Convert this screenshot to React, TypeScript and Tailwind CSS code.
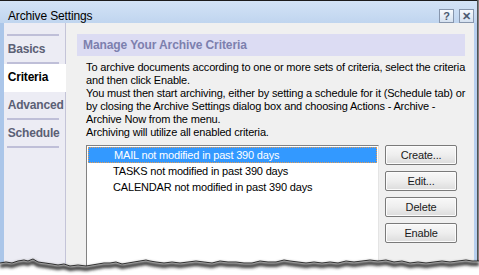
import React from "react";

const tabs = ["Basics", "Criteria", "Advanced", "Schedule"];

const criteria = [
  "MAIL not modified in past 390 days",
  "TASKS not modified in past 390 days",
  "CALENDAR not modified in past 390 days",
];

const intro = [
  "To archive documents according to one or more sets of criteria, select the criteria",
  "and then click Enable.",
  "You must then start archiving, either by setting a schedule for it (Schedule tab) or",
  "by closing the Archive Settings dialog box and choosing Actions - Archive -",
  "Archive Now from the menu.",
  "Archiving will utilize all enabled criteria.",
];

// jagged bottom edge of the "torn paper" screenshot effect
const tearPts: [number, number][] = [
  [0, 8], [6, 7], [12, 8], [18, 6], [24, 5], [28, 6], [33, 4], [38, 7], [45, 8], [52, 9], [58, 10],
  [64, 9], [70, 11], [78, 10], [86, 11], [92, 10], [98, 9], [104, 8], [110, 8], [116, 7], [122, 9],
  [128, 8], [134, 7], [140, 6], [146, 5], [150, 6], [156, 7], [164, 8], [172, 7], [180, 8], [188, 7],
  [196, 6], [204, 7], [212, 8], [220, 6], [228, 7], [236, 7], [244, 8], [252, 8], [260, 6], [268, 7],
  [276, 7], [284, 5], [290, 6], [298, 7], [306, 8], [314, 7], [322, 8], [330, 7], [338, 8], [346, 6],
  [354, 7], [362, 6], [370, 5], [378, 6], [386, 5], [394, 7], [402, 6], [410, 8], [418, 7], [426, 8],
  [434, 7], [442, 6], [450, 7], [458, 6], [466, 5], [472, 6], [479, 6],
];

function TornEdge() {
  const line = tearPts.map(([x, y], i) => `${i ? "L" : "M"}${x} ${y}`).join(" ");
  return (
    <svg className="absolute left-0 bottom-0" width="479" height="20" viewBox="0 0 479 20">
      <defs>
        <filter id="blur" x="-5%" y="-100%" width="110%" height="300%">
          <feGaussianBlur stdDeviation="1.6" />
        </filter>
      </defs>
      <path d={`${line} L479 20 L0 20 Z`} fill="#ffffff" />
      <path d={line} transform="translate(0 3)" stroke="#3a3a3a" strokeWidth="4" fill="none" filter="url(#blur)" />
      <path d={line} stroke="#1e1e1e" strokeWidth="0.9" fill="none" />
    </svg>
  );
}

function CaptionButton({ label }: { label: string }) {
  return (
    <div className="w-[15px] h-[14px] border border-[#8796ad] bg-gradient-to-b from-[#f7fafd] to-[#d5e1f0] flex items-center justify-center text-[11px] font-bold leading-none text-[#4b5a70]">
      {label}
    </div>
  );
}

function Button({ label }: { label: string }) {
  return (
    <button className="w-[72px] h-[20px] border border-[#7a7a7a] rounded-[2px] bg-gradient-to-b from-[#f8f8f8] via-[#eeeeee] to-[#dcdcdc] text-[11px] tracking-[-0.15px] text-[#1a1a1a] leading-none shadow-[inset_0_0_0_1px_#fcfcfc]">
      {label}
    </button>
  );
}

export default function App() {
  return (
    <div className="relative w-[479px] h-[275px] bg-white overflow-hidden font-['Liberation_Sans',Arial,sans-serif]">
      <div className="flex h-full">
        <div className="flex flex-col w-[477px] border-t border-[#1c1c1c]">
          {/* title bar */}
          <div className="h-[26px] flex items-start pl-[8px] pr-[3px] bg-gradient-to-b from-[#d3e3f6] to-[#c0d5ef]">
            <span className="mt-[8px] text-[12px] leading-[14px] tracking-[-0.15px] text-black">Archive Settings</span>
            <div className="ml-auto mt-[8px] flex gap-[5px]">
              <CaptionButton label="?" />
              <CaptionButton label="✕" />
            </div>
          </div>

          <div className="flex flex-1 bg-[#f0f0f0]">
            <div className="w-[4px] bg-[#abc6e9]" />

            {/* side tabs */}
            <div className="w-[66px] flex flex-col bg-[#ececf4] border-r border-[#c4c4d8] pt-[11px]">
              <div className="ml-[3px] mr-[6px] h-[2px] bg-[#bfbfd8]" />
              {tabs.map((t) => {
                const active = t === "Criteria";
                return (
                  <div key={t} className={active ? "-mr-[1px] bg-white" : ""}>
                    <div
                      className={`h-[26px] flex items-center pl-[4px] text-[12px] font-bold tracking-[-0.2px] ${
                        active ? "text-black" : "text-[#5b6075]"
                      }`}
                    >
                      {t}
                    </div>
                    {!active && <div className="ml-[3px] mr-[6px] h-[2px] bg-[#bfbfd8]" />}
                    {active && <div className="h-[2px]" />}
                  </div>
                );
              })}
            </div>

            {/* main panel */}
            <div className="flex-1 pl-[11px] pr-[9px] pt-[11px]">
              <div className="h-[22px] bg-[#dcdcf3] flex items-center pl-[6px] text-[12px] font-bold tracking-[-0.1px] text-[#7c80ae]">
                Manage Your Archive Criteria
              </div>

              <div className="ml-[9px] mt-[5px] text-[11px] leading-[13px] tracking-[-0.17px] text-black whitespace-nowrap">
                {intro.map((l) => (
                  <div key={l}>{l}</div>
                ))}
              </div>

              <div className="ml-[9px] mt-[6px] flex gap-[6px]">
                <div className="w-[293px] h-[130px] bg-white border-t border-l border-[#828282] border-r border-r-[#e4e4e4] pt-[1px] pl-[1px] pr-[1px]">
                  {criteria.map((c, i) => (
                    <div
                      key={c}
                      className={`h-[16px] flex items-center pl-[25px] text-[11px] tracking-[-0.18px] whitespace-nowrap ${
                        i === 0
                          ? "bg-[#3399ff] text-white border border-dotted border-[#e39b55] pl-[24px]"
                          : "text-black"
                      }`}
                    >
                      {c}
                    </div>
                  ))}
                </div>
                <div className="flex flex-col gap-[6px]">
                  <Button label="Create..." />
                  <Button label="Edit..." />
                  <Button label="Delete" />
                  <Button label="Enable" />
                </div>
              </div>
            </div>

            <div className="w-[3px] bg-[#b7cfee]" />
          </div>
        </div>
        <div className="w-[2px] bg-gradient-to-r from-[#3c3c3c] to-[#9a9a9a]" />
      </div>
      <TornEdge />
    </div>
  );
}
